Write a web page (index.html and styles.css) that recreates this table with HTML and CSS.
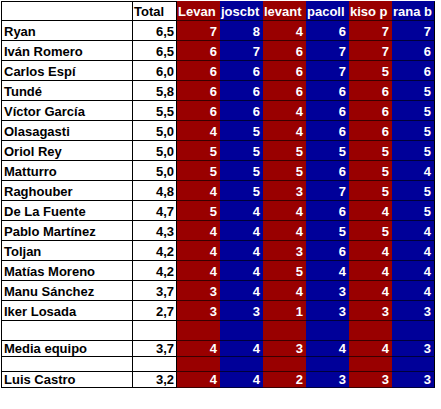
FILE: index.html
```html
<!DOCTYPE html>
<html lang="es">
<head>
  <meta charset="UTF-8" />
  <title>Puntuaciones</title>
  <link rel="stylesheet" href="styles.css">
</head>
<body>

<table class="sheet">
  <colgroup>
    <col class="c-name">
    <col class="c-total">
    <col class="c-vote"><col class="c-vote"><col class="c-vote">
    <col class="c-vote"><col class="c-vote"><col class="c-vote">
  </colgroup>
  <thead>
    <tr class="head">
      <th class="name"></th>
      <th class="total">Total</th>
      <th class="red">Levan</th>
      <th class="blue">joscbt</th>
      <th class="red">levant</th>
      <th class="blue">pacoll</th>
      <th class="red">kiso p</th>
      <th class="blue last">rana b</th>
    </tr>
  </thead>
  <tbody id="rows"></tbody>
</table>

<script>
  // nombre, media, votos
  const rows = [
    ["Ryan", "6,5", [7, 8, 4, 6, 7, 7]],
    ["Iván Romero", "6,5", [6, 7, 6, 7, 7, 6]],
    ["Carlos Espí", "6,0", [6, 6, 6, 7, 5, 6]],
    ["Tundé", "5,8", [6, 6, 6, 6, 6, 5]],
    ["Víctor García", "5,5", [6, 6, 4, 6, 6, 5]],
    ["Olasagasti", "5,0", [4, 5, 4, 6, 6, 5]],
    ["Oriol Rey", "5,0", [5, 5, 5, 5, 5, 5]],
    ["Matturro", "5,0", [5, 5, 5, 6, 5, 4]],
    ["Raghouber", "4,8", [4, 5, 3, 7, 5, 5]],
    ["De La Fuente", "4,7", [5, 4, 4, 6, 4, 5]],
    ["Pablo Martínez", "4,3", [4, 4, 4, 5, 5, 4]],
    ["Toljan", "4,2", [4, 4, 3, 6, 4, 4]],
    ["Matías Moreno", "4,2", [4, 4, 5, 4, 4, 4]],
    ["Manu Sánchez", "3,7", [3, 4, 4, 3, 4, 4]],
    ["Iker Losada", "2,7", [3, 3, 1, 3, 3, 3]],
    null,
    ["Media equipo", "3,7", [4, 4, 3, 4, 4, 3], "short"],
    null,
    ["Luis Castro", "3,2", [4, 4, 2, 3, 3, 3], "short"]
  ];

  const body = document.getElementById("rows");
  let blanks = 0;
  rows.forEach(function (r) {
    const tr = document.createElement("tr");
    let cells;
    if (r === null) {
      blanks++;
      tr.className = blanks === 1 ? "gap" : "gap thin";
      cells = ["", "", ["", "", "", "", "", ""]];
    } else {
      if (r[3]) tr.className = r[3];
      cells = r;
    }
    let html = '<td class="name">' + cells[0] + '</td><td class="total">' + cells[1] + '</td>';
    cells[2].forEach(function (v, i) {
      let cls = i % 2 === 0 ? "red" : "blue";
      if (i === 5) cls += " last";
      html += '<td class="' + cls + '">' + v + '</td>';
    });
    tr.innerHTML = html;
    body.appendChild(tr);
  });
</script>

</body>
</html>
```

FILE: styles.css
```css
body {
  margin: 0;
  padding: 1px 0 0 1px;
  background: #fff;
  font-family: "Liberation Sans", Arial, sans-serif;
}

.sheet {
  border-collapse: separate;
  border-spacing: 0;
  table-layout: fixed;
  width: 434px;
  font-size: 13px;
  font-weight: bold;
  color: #000;
}

.c-name { width: 132px; }
.c-total { width: 44px; }
.c-vote { width: 43px; }

.sheet th,
.sheet td {
  box-sizing: border-box;
  padding: 0 3px 1px 2px;
  line-height: 15px;
  vertical-align: bottom;
  white-space: nowrap;
  overflow: hidden;
  text-align: right;
  font-weight: bold;
}

.sheet tr { height: 20px; }
.sheet tr.head { height: 20px; }
.sheet tr.gap { height: 20px; }
.sheet tr.short { height: 16px; }
.sheet tr.gap.thin { height: 15px; }
.sheet tr.short td { line-height: 13px; padding-bottom: 1px; }

.sheet .name {
  text-align: left;
  border-left: 1px solid #000;
  border-right: 1px solid #000;
  border-bottom: 1px solid #000;
}

.sheet .total {
  padding-right: 2px;
  border-right: 1px solid #000;
  border-bottom: 1px solid #000;
}

.head th {
  border-top: 1px solid #000;
  text-align: left;
  padding-left: 1px;
  padding-right: 0;
  text-overflow: clip;
}

.head th.name { padding-left: 2px; }
.head th.total { padding-left: 1px; }

.red {
  background: #990000;
  color: #fff;
  border-bottom: 1px solid #3a0000;
}

.blue {
  background: #000099;
  color: #fff;
  border-bottom: 1px solid #00003a;
}

.head .red,
.head .blue {
  border-top-color: transparent;
}

.last {
  border-right: 1px solid #000;
}
```
